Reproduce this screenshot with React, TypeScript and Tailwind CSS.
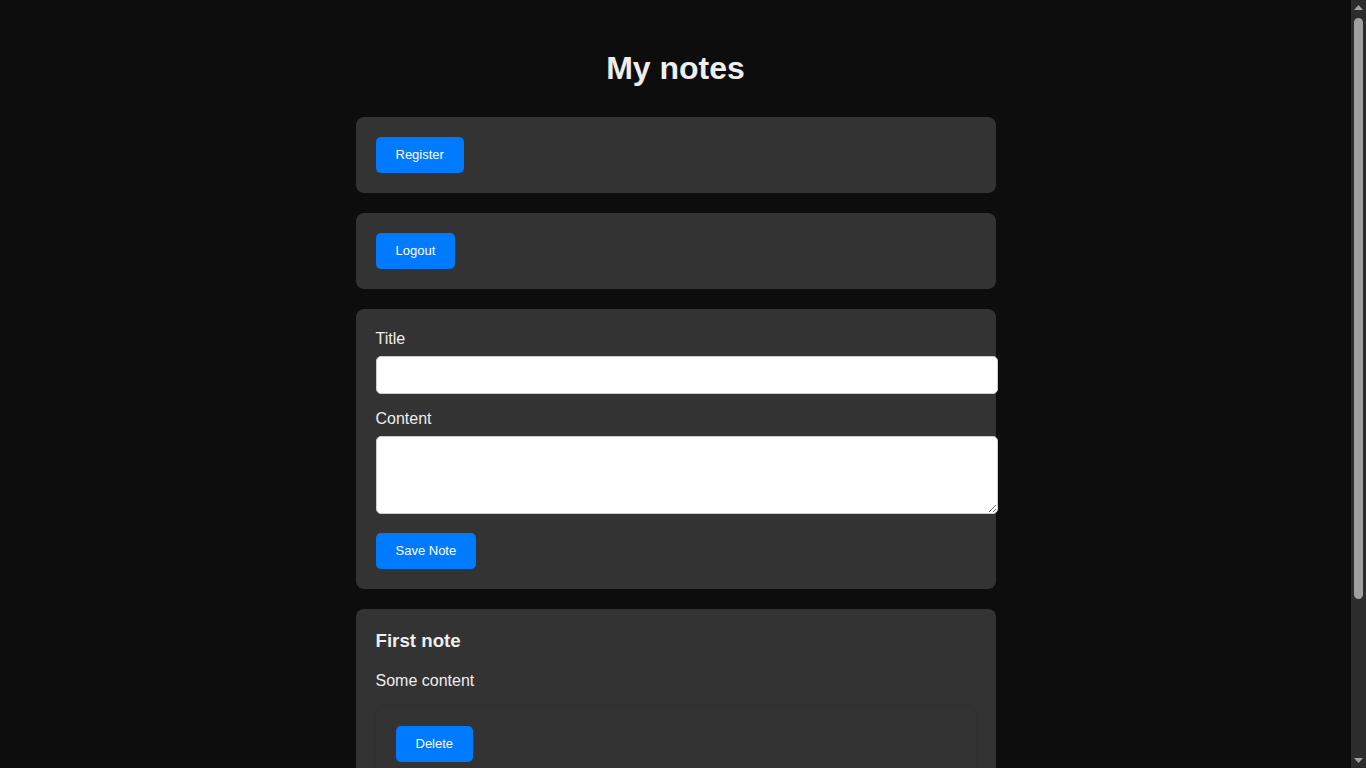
type BtnProps = { label: string };

function Btn({ label }: BtnProps) {
  return (
    <button className="h-9 px-5 pb-px rounded-[5px] bg-[#007bff] text-white text-[13px] leading-[15px] cursor-pointer">
      {label}
    </button>
  );
}

function Card({ children }: { children: React.ReactNode }) {
  return <div className="bg-[#333333] rounded-lg p-5 mb-5">{children}</div>;
}

// page scrollbar as it shows in the screenshot
function ScrollBar() {
  return (
    <div className="w-[15px] shrink-0 h-screen bg-[#2c2c2c] flex flex-col items-center">
      <svg width="9" height="5" viewBox="0 0 9 5" className="mt-[5px]">
        <path d="M4.5 0 L9 5 L0 5 Z" fill="#a3a3a3" />
      </svg>
      <div className="mt-[8px] w-[9px] h-[581px] rounded-full bg-[#9f9f9f]" />
      <div className="flex-1" />
      <svg width="9" height="5" viewBox="0 0 9 5" className="mb-[5px]">
        <path d="M0 0 L9 0 L4.5 5 Z" fill="#a3a3a3" />
      </svg>
    </div>
  );
}

export default function App() {
  return (
    <div className="h-screen overflow-hidden flex bg-[#0d0d0d] text-[#eeeeee] font-['Liberation_Sans',Arial,sans-serif]">
      <div className="flex-1 min-w-0 pt-[50px] pb-[140px]">
        <h1 className="text-center text-[32px] leading-[37px] font-bold mb-[30px]">My notes</h1>
        <div className="w-[640px] mx-auto">
          <Card>
            <Btn label="Register" />
          </Card>
          <Card>
            <Btn label="Logout" />
          </Card>
          <Card>
            <label className="block text-base leading-[18px] pt-px mb-[8px]">Title</label>
            <input
              type="text"
              className="block box-content w-full h-4 p-[10px] mb-[15px] bg-white text-black border border-[#cccccc] rounded-[5px] outline-none"
            />
            <label className="block text-base leading-[18px] pt-px mb-[8px]">Content</label>
            <textarea className="block box-content w-full h-14 p-[10px] mb-[19px] bg-white text-black border border-[#cccccc] rounded-[5px] outline-none" />
            <Btn label="Save Note" />
          </Card>
          <Card>
            <h3 className="text-[18.72px] leading-[21.5px] font-bold pt-px">First note</h3>
            <p className="text-base leading-[18.4px] mt-5 mb-4">Some content</p>
            <div className="bg-[#333333] rounded-lg p-5 shadow-[0_0_2px_rgba(0,0,0,0.2)]">
              <Btn label="Delete" />
            </div>
          </Card>
        </div>
      </div>
      <ScrollBar />
    </div>
  );
}
